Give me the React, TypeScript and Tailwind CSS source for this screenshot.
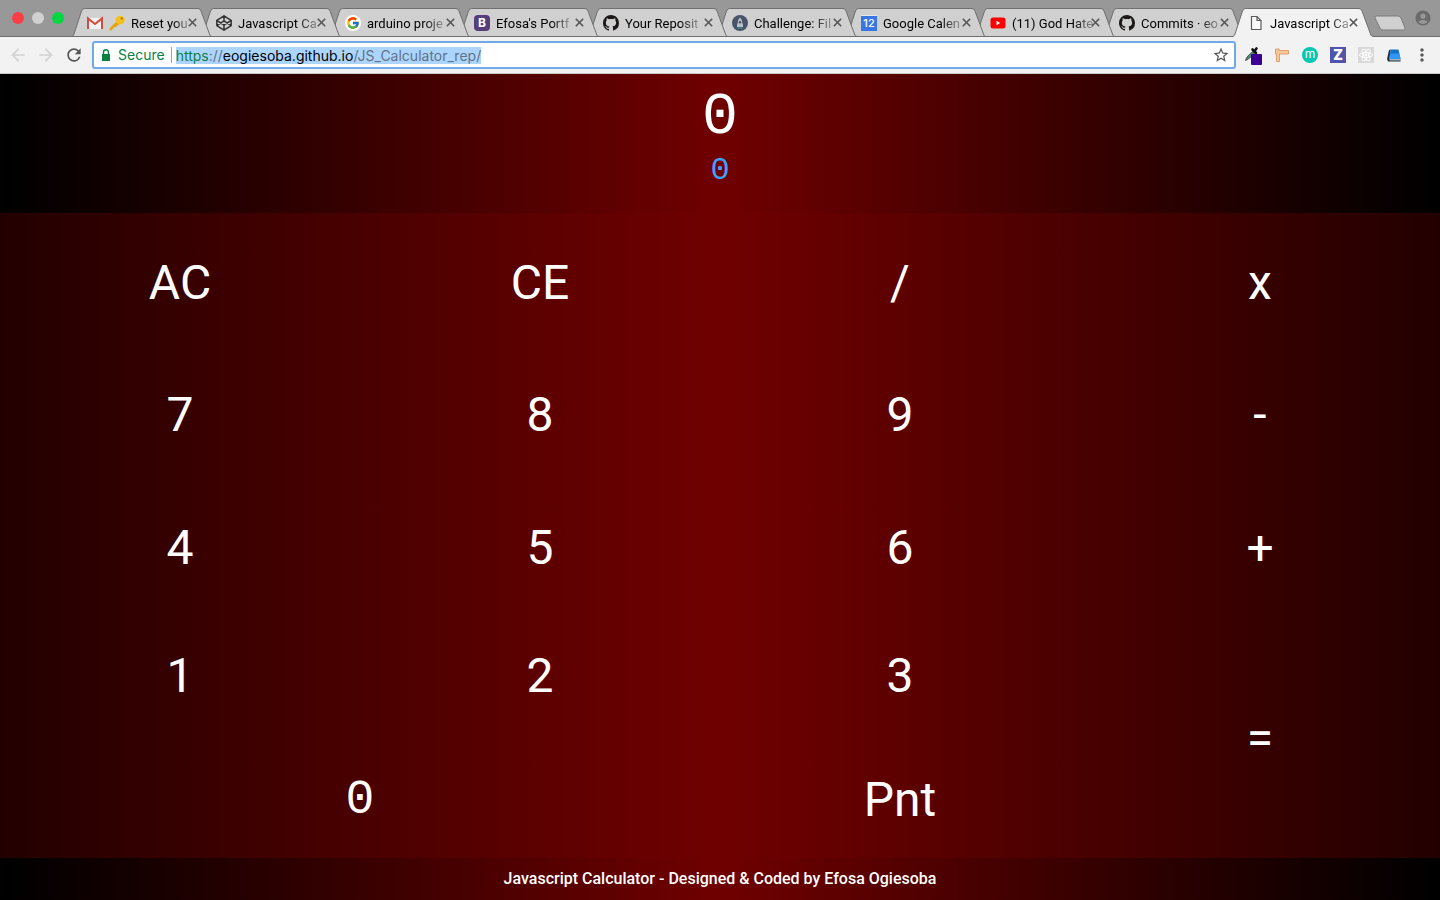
import React from "react";
import { FcGoogle } from "react-icons/fc";
import { VscGithubInverted } from "react-icons/vsc";
import { MdAccountCircle, MdMoreVert, MdRefresh, MdStarBorder, MdArrowBack, MdArrowForward } from "react-icons/md";

function GmailIcon() {
  return (
    <svg viewBox="0 0 16 16" className="size-4 shrink-0">
      <path d="M1 3h14v11H1z" fill="#f2f2f2" />
      <path d="M1 14V3.4L8 9l7-5.6V14" fill="none" stroke="#d54b3d" strokeWidth="2" />
    </svg>
  );
}

function KeyIcon() {
  return (
    <svg viewBox="0 0 16 16" className="size-4 shrink-0">
      <path d="M8 6 .6 13.200v2.200h2.600v-1.600h1.600v-1.600h1.600L10.500 9z" fill="#e5a50f" />
      <ellipse cx="11.200" cy="5" rx="4.600" ry="4.200" fill="#f5bf1c" />
      <circle cx="12.800" cy="3.400" r="1.200" fill="#a87a12" />
    </svg>
  );
}

function CodepenIcon() {
  return (
    <svg viewBox="0 0 16 16" className="size-4 shrink-0" fill="none" stroke="#333" strokeWidth="1.500" strokeLinejoin="round">
      <path d="M8 .8 15.200 5.400v5.200L8 15.200.8 10.600V5.400zM8 .8v5M8 10.200v5M.8 5.400 8 10.200l7.200-4.800M.8 10.600 8 5.800l7.200 4.800" />
    </svg>
  );
}

function GoogleIcon() {
  return (
    <span className="flex size-4 shrink-0 items-center justify-center rounded-full bg-white">
      <FcGoogle className="size-3.5" />
    </span>
  );
}

function BootstrapIcon() {
  return (
    <span className="flex size-4 shrink-0 items-center justify-center rounded-sm bg-[#563d7c] text-xs font-bold text-white">B</span>
  );
}

function GithubIcon() {
  return <VscGithubInverted className="size-4 shrink-0 text-[#1b1817]" />;
}

function RocketIcon() {
  return (
    <svg viewBox="0 0 16 16" className="size-4 shrink-0">
      <circle cx="8" cy="8" r="8" fill="#4a5468" />
      <path d="M8 2.500C6 4.500 5.800 6 5.800 8L5 9.500V12h6V9.500L10.200 8c0-2-.2-3.500-2.200-5.500z" fill="#b8bfc8" />
      <circle cx="8" cy="7.200" r="1.200" fill="#4a5468" />
      <path d="M6.300 12.300h1v1.800h-1zM8.700 12.300h1v1.800h-1z" fill="#2fb39a" />
    </svg>
  );
}

function CalendarIcon() {
  return (
    <span className="flex size-4 shrink-0 items-center justify-center border-t border-[#e8e8e8] bg-[#3a76e3] text-[11px] font-medium text-white">12</span>
  );
}

function YoutubeIcon() {
  return (
    <svg viewBox="0 0 16 16" className="size-4 shrink-0">
      <rect x="0.500" y="2.500" width="15" height="11" rx="2.500" fill="#f00" />
      <path d="M6.500 5.800v4.400L10.200 8z" fill="#fff" />
    </svg>
  );
}

function PageIcon() {
  return (
    <svg viewBox="0 0 16 16" className="size-4 shrink-0" fill="#fafafa" stroke="#5a5a5a" strokeWidth="1.200">
      <path d="M3.500 1.500h5.500l4 4v9h-9.500zM9 1.500v4h4" />
    </svg>
  );
}

const tabs: { title: string; icon: React.ReactNode; z: string; active?: boolean }[] = [
  { title: "Reset you", icon: <><GmailIcon /><KeyIcon /></>, z: "z-10" },
  { title: "Javascript Ca", icon: <CodepenIcon />, z: "z-9" },
  { title: "arduino proje", icon: <GoogleIcon />, z: "z-8" },
  { title: "Efosa's Portf", icon: <BootstrapIcon />, z: "z-7" },
  { title: "Your Reposit", icon: <GithubIcon />, z: "z-6" },
  { title: "Challenge: Fil", icon: <RocketIcon />, z: "z-5" },
  { title: "Google Calen", icon: <CalendarIcon />, z: "z-4" },
  { title: "(11) God Hate", icon: <YoutubeIcon />, z: "z-3" },
  { title: "Commits · eo", icon: <GithubIcon />, z: "z-2" },
  { title: "Javascript Ca", icon: <PageIcon />, z: "z-20", active: true },
];

function Tab({ title, icon, z, active }: (typeof tabs)[number]) {
  return (
    <div role="tab" aria-selected={!!active} className={`relative -mr-[13px] flex h-[29px] w-[142px] shrink items-center ${z}`}>
      <svg viewBox="0 0 142 29" preserveAspectRatio="none" className="absolute inset-0 size-full">
        <path
          d="M0 29C2 28 2 28 3 26L10.500 3Q11.500.5 13.500.5H127Q129 .5 130 3L138.500 26C139 28 140 28.500 142 29Z"
          fill={active ? "#f2f2f2" : "#d0d0d0"}
        />
        <path
          d="M0 28.500C2 28 2 28 3 26L10.500 3Q11.500.5 13.500.5H127Q129 .5 130 3L138.500 26C139 28 140 28.500 142 28.500"
          fill="none"
          stroke="#6f6f6f"
        />
        {!active && <path d="M0 28.500H142" stroke="#6f6f6f" />}
      </svg>
      <div className="relative flex min-w-0 grow items-center gap-1.5 pr-4 pl-4">
        {icon}
        <span className="-mr-1.5 min-w-0 grow">
          <span className="inline-block mask-r-from-75% mask-r-to-110% align-middle font-[Roboto,'Liberation_Sans',sans-serif] text-[13px] leading-5 whitespace-nowrap text-black">{title}</span>
        </span>
        <button aria-label={`Close ${title}`} className="shrink-0">
          <svg viewBox="0 0 9 9" className="size-[9px]" stroke="#555" strokeWidth="1.600">
            <path d="m.8.8 7.400 7.400M8.200.8.8 8.200" />
          </svg>
        </button>
      </div>
    </div>
  );
}

function Extensions() {
  return (
    <div className="flex items-center gap-3">
      <button aria-label="Color picker">
        <svg viewBox="0 0 18 20" className="h-5 w-[18px]">
          <path d="M1.500 15.500C2 12.500 5.500 9 9 6.500l1.500 1.500C8 11 5 14 1.500 15.500z" fill="#4d8f72" stroke="#333" strokeWidth=".8" />
          <path d="m8.500 4.500 3.500 3.500M10.500 6l2-2.500" stroke="#111" strokeWidth="2.600" strokeLinecap="round" />
          <rect x="7" y="9" width="11" height="11" rx="1" fill="#3b0094" />
        </svg>
      </button>
      <button aria-label="Page ruler">
        <svg viewBox="0 0 16 16" className="size-4">
          <path d="M1.500 2h3.500v1.500H14.500V7H5.500v7.500H2.500V7h-1z" fill="#f7c798" stroke="#d9905a" strokeWidth=".8" />
        </svg>
      </button>
      <button aria-label="Momentum" className="flex size-4 items-center justify-center rounded-full bg-[#00c8b4] pb-0.5 text-xs text-white">m</button>
      <button aria-label="Zotero" className="flex size-4 items-center justify-center bg-[#5055ab] text-sm font-black text-white">Z</button>
      <button aria-label="React tools">
        <svg viewBox="0 0 16 16" className="size-4" fill="none" stroke="#fff">
          <path d="M0 0h16v16H0z" fill="#d8d8d8" stroke="none" />
          <ellipse cx="8" cy="8" rx="6.500" ry="2.500" />
          <ellipse cx="8" cy="8" rx="6.500" ry="2.500" transform="rotate(60 8 8)" />
          <ellipse cx="8" cy="8" rx="6.500" ry="2.500" transform="rotate(120 8 8)" />
          <circle cx="8" cy="8" r="1" fill="#fff" />
        </svg>
      </button>
      <button aria-label="Reader">
        <svg viewBox="0 0 16 16" className="size-4">
          <path d="m1 12 2-9 1.500-.5L3.500 12l11 .500v2H2z" fill="#25303c" />
          <path d="M4.500 2.500h8L14.500 12H3.500z" fill="#1470c8" />
          <path d="M4.200 6.500h9.200L14.500 12H3.500z" fill="#2f96f5" />
          <path d="M3.500 12h11v1.500h-11z" fill="#aab4bd" />
        </svg>
      </button>
      <button aria-label="Menu" className="-mx-0.5"><MdMoreVert className="size-5 text-[#555]" /></button>
    </div>
  );
}

function Browser() {
  return (
    <header className="font-[Inter,'Liberation_Sans',sans-serif]">
      <div className="flex h-[37px] items-end border-b border-[#6f6f6f] bg-[#989898]">
        <div className="flex h-full w-[71px] shrink-0 items-center gap-2 pl-3">
          <button aria-label="Close window" className="size-3 rounded-full bg-[#fc3e47]" />
          <button aria-label="Minimize window" className="size-3 rounded-full bg-[#d0d0d0]" />
          <button aria-label="Zoom window" className="size-3 rounded-full bg-[#00d741]" />
        </div>
        <div role="tablist" className="-mb-px flex min-w-0">
          {tabs.map((tab, i) => <Tab key={i} {...tab} />)}
        </div>
        <button aria-label="New tab" className="mb-1 ml-3">
          <svg viewBox="0 0 34 17" className="h-[17px] w-[34px]">
            <path d="M3 1h22q2 0 3 2l4 10q.6 2-1.500 2H10q-2 0-3-2L2 3Q1.500 1 3 1z" fill="#d0d0d0" stroke="#7c7c7c" />
          </svg>
        </button>
        <button aria-label="Profile" className="mr-2 ml-auto self-center"><MdAccountCircle className="size-[18px] text-[#6b6b6b]" /></button>
      </div>
      <div className="flex h-[37px] items-center border-b border-[#c8c8c8] bg-[#f2f2f2] pr-2.5 pl-2">
        <div className="flex w-[84px] shrink-0 items-center gap-2">
          <button aria-label="Back"><MdArrowBack className="size-5 text-[#d2d2d2]" /></button>
          <button aria-label="Forward"><MdArrowForward className="size-5 text-[#d2d2d2]" /></button>
          <button aria-label="Reload"><MdRefresh className="size-5 text-[#555]" /></button>
        </div>
        <div className="mr-2 flex h-7 grow items-center rounded-[3px] border-2 border-[#70a9e8] bg-white px-1 text-sm">
          <svg viewBox="0 0 16 16" className="mr-1 size-4">
            <path d="M4 7h8v7H4z" fill="#0b8043" />
            <path d="M5.500 7V5.200a2.500 2.500 0 0 1 5 0V7" fill="none" stroke="#0b8043" strokeWidth="1.400" />
          </svg>
          <span className="mr-1.5 text-[#0b8043]">Secure</span>
          <span className="mr-1 h-4 w-px bg-[#a0a0a0]" />
          <a href="https://eogiesoba.github.io/JS_Calculator_rep/" className="bg-[#acd5fe] leading-[17px] text-[#5f7286]">
            <span className="text-[#0b8043]">https</span>://<span className="text-black">eogiesoba.github.io</span>/JS_Calculator_rep/
          </a>
          <button aria-label="Bookmark" className="ml-auto"><MdStarBorder className="size-[18px] text-[#555]" /></button>
        </div>
        <Extensions />
      </div>
    </header>
  );
}

const keys: { label: string; place?: string }[] = [
  { label: "AC" }, { label: "CE" }, { label: "/" }, { label: "x" },
  { label: "7" }, { label: "8" }, { label: "9" }, { label: "-" },
  { label: "4" }, { label: "5" }, { label: "6" }, { label: "+" },
  { label: "1" }, { label: "2" }, { label: "3" }, { label: "=", place: "row-span-2" },
  { label: "0", place: "col-span-2 font-['Liberation_Mono',monospace]" }, { label: "Pnt" },
];

export default function App() {
  return (
    <div className="flex min-h-screen flex-col">
      <Browser />
      <main className="flex grow flex-col bg-linear-to-r/srgb from-[#000000] via-[#700000] to-[#000000] font-[Roboto,'Liberation_Sans',sans-serif] text-white">
        <section aria-label="Display" className="flex h-[139px] flex-col items-center pt-2.5 font-['Liberation_Mono',monospace]">
          <output className="text-6xl leading-[66px]">0</output>
          <output className="text-[32px] leading-[42px] text-[#3fa0ff]">0</output>
        </section>
        <section
          aria-label="Keypad"
          className="grid grow grid-cols-4 grid-rows-[132fr_132fr_132fr_124fr_124fr] bg-linear-to-r/srgb from-[#230000] via-[#700000] to-[#230000]"
        >
          {keys.map(({ label, place }) => (
            <button key={label} className={`pt-2 text-5xl ${place ?? ""}`}>{label}</button>
          ))}
        </section>
        <footer className="flex h-[42px] items-center justify-center text-base font-medium">
          Javascript Calculator - Designed &amp; Coded by Efosa Ogiesoba
        </footer>
      </main>
    </div>
  );
}
